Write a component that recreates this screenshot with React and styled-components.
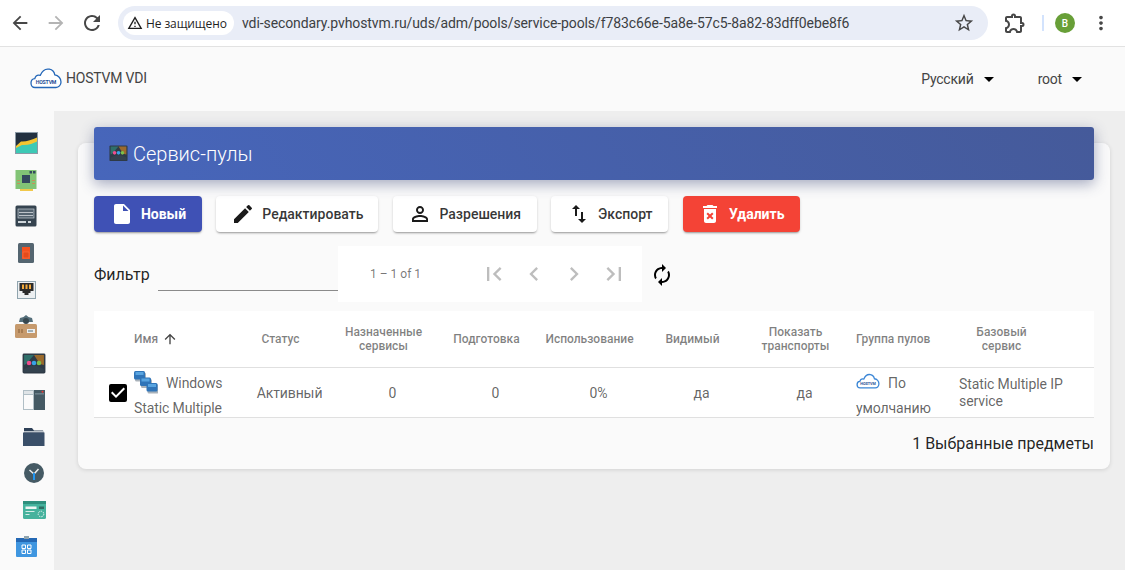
import React from 'react';
import styled, { createGlobalStyle } from 'styled-components';
import {
  MdArrowBack, MdArrowForward, MdRefresh, MdOutlineWarningAmber, MdStarBorder, MdOutlineExtension,
  MdMoreVert, MdArrowDropDown, MdInsertDriveFile, MdEdit, MdPermIdentity, MdImportExport,
  MdDeleteForever, MdFirstPage, MdChevronLeft, MdChevronRight, MdLastPage, MdAutorenew,
  MdArrowUpward, MdCheckBox,
} from 'react-icons/md';

const GlobalStyle = createGlobalStyle`
  html, body {
    margin: 0;
    height: 570px;
    overflow: hidden;
    background: #eeeeee;
    font-family: Roboto, "Liberation Sans", sans-serif;
  }
  * { box-sizing: border-box; }
`;

const BrowserBar = styled.div`
  height: 47px;
  background: #ffffff;
  border-bottom: 1px solid #e2e2e2;
  display: flex;
  align-items: center;
  padding-left: 2px;
  color: #474747;
`;

const NavIcon = styled.span`
  width: 36px;
  height: 24px;
  margin-left: ${p => p.$ml || 0}px;
  display: flex;
  align-items: center;
  justify-content: center;
  color: ${p => (p.$off ? '#b4b4b4' : '#474747')};
  font-size: ${p => p.$size || 20}px;
`;

const AddressBar = styled.div`
  width: 870px;
  height: 34px;
  margin-left: 8px;
  border-radius: 17px;
  background: #e9edf7;
  display: flex;
  align-items: center;
  padding: 0 13px 0 5px;
`;

const SecurityPill = styled.div`
  height: 24px;
  width: 111px;
  border-radius: 12px;
  background: #ffffff;
  display: flex;
  align-items: center;
  padding-left: 4px;
  gap: 3px;
  font-size: 12px;
  font-weight: 500;
  color: #1f1f1f;
  font-family: "Open Sans", Roboto, sans-serif;
  letter-spacing: -0.1px;
  svg { font-size: 16px; }
`;

const Url = styled.div`
  flex: 1;
  margin-left: 8px;
  font-size: 14px;
  color: #3c4043;
  letter-spacing: -0.09px;
`;

const BarDivider = styled.div`
  width: 2px;
  height: 16px;
  background: #d3e3fd;
  margin: 0 11px 0 9px;
`;

const Avatar = styled.div`
  width: 20px;
  height: 20px;
  border-radius: 50%;
  background: #689f38;
  color: #ffffff;
  font-size: 10px;
  font-weight: 500;
  display: flex;
  align-items: center;
  justify-content: center;
  margin-right: 8px;
`;

const NavBar = styled.div`
  height: 64px;
  background: #fafafa;
  display: flex;
  align-items: center;
  padding: 0 36px 0 30px;
  color: #444444;
  font-size: 14px;
`;

const Brand = styled.div`
  display: flex;
  align-items: center;
  gap: 4px;
  flex: 1;
  margin-top: -2px;
  letter-spacing: -0.2px;
`;

const MenuLink = styled.div`
  display: flex;
  align-items: center;
  margin-left: ${p => p.$ml || 0}px;
  letter-spacing: -0.2px;
  svg { font-size: 24px; margin-left: 3px; color: #000; }
`;

const Body = styled.div`
  display: flex;
  height: 459px;
`;

const Sidebar = styled.div`
  width: 54px;
  flex: none;
  background: #fafafa;
  padding-top: 20px;
  display: flex;
  flex-direction: column;
  gap: 12.7px;
`;

const SideItem = styled.div`
  height: 24px;
  width: 24px;
  margin-left: ${p => (p.$sub ? 22 : 14)}px;
  display: flex;
  align-items: center;
  justify-content: center;
`;

const Main = styled.div`
  flex: 1;
  padding: 32px 15px 0 24px;
`;

const Card = styled.div`
  background: #fafafa;
  border-radius: 8px;
  padding: 0 16px;
  height: 326px;
  box-shadow: 0 1px 4px rgba(0, 0, 0, 0.12);
`;

const CardHeader = styled.div`
  height: 53px;
  position: relative;
  top: -16px;
  margin-bottom: -16px;
  border-radius: 3px;
  background: linear-gradient(60deg, #4766bb, #455a9a);
  box-shadow: 0 4px 14px rgba(60, 72, 120, 0.45);
  color: #ffffff;
  font-size: 20px;
  font-weight: 300;
  display: flex;
  align-items: center;
  gap: 5px;
  padding-left: 15px;
`;

const Toolbar = styled.div`
  display: flex;
  gap: 14.3px;
  margin-top: 16px;
`;

const ActionButton = styled.div`
  height: 36px;
  width: ${p => p.$w}px;
  border-radius: 4px;
  background: ${p => p.$bg || '#ffffff'};
  color: ${p => (p.$bg ? '#ffffff' : 'rgba(0, 0, 0, 0.8)')};
  font-size: 14px;
  font-weight: ${p => (p.$bg ? 700 : 500)};
  display: flex;
  align-items: center;
  justify-content: center;
  gap: 7px;
  box-shadow: 0 2px 2px -1px rgba(0, 0, 0, 0.3), 0 1px 3px rgba(0, 0, 0, 0.14);
  svg { font-size: 24px; color: ${p => (p.$bg ? '#ffffff' : '#1a1a1a')}; }
`;

const FilterRow = styled.div`
  display: flex;
  align-items: center;
  margin-top: 14px;
  height: 56px;
`;

const FilterLabel = styled.div`
  width: 64px;
  font-size: 16px;
  color: rgba(0, 0, 0, 0.87);
`;

const FilterInput = styled.div`
  width: 180px;
  height: 32px;
  align-self: flex-end;
  margin-bottom: 11px;
  border-bottom: 1px solid #8a8a8a;
`;

const Paginator = styled.div`
  width: 304px;
  height: 56px;
  background: #ffffff;
  display: flex;
  align-items: center;
  padding-left: 32px;
  color: rgba(0, 0, 0, 0.54);
  font-size: 12px;
`;

const RangeLabel = styled.div`
  width: 104px;
`;

const PageButton = styled.div`
  width: 40px;
  height: 40px;
  display: flex;
  align-items: center;
  justify-content: center;
  color: rgba(0, 0, 0, 0.26);
  font-size: 28px;
`;

const ReloadIcon = styled.div`
  margin: 1px 0 0 8px;
  display: flex;
  color: #000000;
  font-size: 24px;
`;

const Table = styled.div`
  margin-top: 9px;
  background: #ffffff;
`;

const Row = styled.div`
  display: grid;
  grid-template-columns: 32px repeat(8, 103px) 144px;
  grid-template-rows: 100%;
  height: ${p => p.$h}px;
  border-bottom: 1px solid #e0e0e0;
  overflow: hidden;
`;

const HeadCell = styled.div`
  padding: 0 ${p => p.$pr || 8}px 0 ${p => p.$pl || 8}px;
  display: flex;
  align-items: center;
  justify-content: ${p => (p.$left ? 'flex-start' : 'center')};
  text-align: ${p => (p.$left ? 'left' : 'center')};
  font-size: 12px;
  line-height: 14px;
  font-weight: 500;
  color: rgba(0, 0, 0, 0.5);
  white-space: ${p => (p.$nowrap ? 'nowrap' : 'normal')};
  svg { font-size: 16px; margin-left: 4px; color: #444; }
`;

const Cell = styled.div`
  padding-left: ${p => p.$pl || 18}px;
  display: flex;
  align-items: center;
  justify-content: ${p => (p.$left ? 'flex-start' : 'center')};
  font-size: 14px;
  line-height: ${p => p.$lh || 20}px;
  letter-spacing: -0.1px;
  color: rgba(0, 0, 0, 0.62);
  min-height: 0;
`;

const ServiceText = styled.div`
  width: 112px;
`;

const WrapText = styled.div`
  line-height: 25px;
  margin-top: ${p => p.$mt}px;
  white-space: nowrap;
  svg {
    vertical-align: -1px;
    margin-right: 8px;
    transform: translateY(${p => p.$shift || 0}px);
  }
`;

const CheckCell = styled.div`
  display: flex;
  align-items: center;
  margin-left: 12px;
  color: #000000;
  font-size: 24px;
  svg { flex: none; }
`;

const SelectedInfo = styled.div`
  margin-top: 16px;
  text-align: right;
  font-size: 16px;
  line-height: 20px;
  color: rgba(0, 0, 0, 0.87);
`;

const CloudLogo = ({ w = 32, h = 22, small }) => (
  <svg width={w} height={h} viewBox="0 0 32 22" fill="none">
    <path d="M5 20.5C2.5 20.5 1 18.6 1 16c0-2.500 1.600-4.200 3.800-4.400C5.500 8.800 7.800 7.700 10.300 8.300 12 4.200 15.500 1.500 19.300 2.200c3 .5 5 2.800 5.500 5.700 3.500.4 6.200 3.400 6.200 7 0 3.200-2.300 5.600-5 5.600z" fill="#fff" stroke={small ? '#3b86d6' : '#2467b8'} strokeWidth={small ? 1.800 : 1.300} />
    <text x="16" y="16.500" textAnchor="middle" fontSize="5.200" fontWeight="700" fill="#1f4f96" fontFamily="Roboto, sans-serif">HOSTVM</text>
  </svg>
);

const PoolsIcon = ({ size = 24 }) => (
  <svg width={size} height={size * 0.87} viewBox="0 0 24 21">
    <rect x="0.500" y="0.500" width="23" height="20" rx="1.500" fill="#2e3a46" />
    <path d="M2 2h10l-8 9-2 1z" fill="#2f6f6a" />
    <path d="M22 2H12l6 9 4 1z" fill="#9a6a2c" />
    <path d="M2 19h20v-3l-7-3H9l-7 3z" fill="#33424e" />
    <circle cx="7" cy="10" r="2.300" fill="#ef4d8e" />
    <circle cx="12" cy="10" r="2.300" fill="#38a3e6" />
    <circle cx="17" cy="10" r="2.300" fill="#7cc04b" />
  </svg>
);

const sideIcons = [
  <svg width="23" height="22" viewBox="0 0 23 22"><rect x="0.500" y="0.500" width="22" height="21" fill="#22303f" stroke="#8b9aa6" /><path d="M1 14 6 9.500c5 .5 11-2 16-4V21H1z" fill="#f4c531" /><path d="M1 21v-5l6-3c6 .5 11-1.500 15-3.500V21z" fill="#3dc9b5" /></svg>,
  <svg width="22" height="22" viewBox="0 0 22 22"><path d="M5 20h13v2H5z" fill="#f1c84a" /><rect x="0.500" y="1" width="21" height="19" fill="#82c476" /><rect x="7" y="6" width="8" height="8" fill="#34495e" /><rect x="14.500" y="2" width="2.500" height="2.500" fill="#34495e" /><rect x="18" y="2" width="2.500" height="2.500" fill="#34495e" /><path d="M2 11h3v1H2zm0 3h3v1H2zm15-3h3v1h-3zm0 3h3v1h-3z" fill="#c98f5a" /></svg>,
  <svg width="22" height="22" viewBox="0 0 22 22"><rect x="0.500" y="0.500" width="21" height="21" rx="1.500" fill="#35434f" /><rect x="3" y="4" width="16" height="9" fill="#54636f" stroke="#c4ccd2" strokeWidth="0.700" /><path d="M4 7h14v.8H4zM4 10h14v.8H4z" fill="#dfe4e8" /><path d="M3 16h8v2H3zm10 0h3v2h-3z" fill="#cdd4d9" /></svg>,
  <svg width="16" height="20" viewBox="0 0 16 20"><rect width="16" height="20" rx="1.500" fill="#546570" /><rect x="4" y="4" width="8" height="12" fill="#f4511e" /><rect x="5" y="9" width="6" height="6" fill="#e64a19" stroke="#f77b50" strokeWidth="0.500" /></svg>,
  <svg width="19" height="18" viewBox="0 0 19 18"><rect x="0.500" y="0.500" width="18" height="17" fill="#eceff1" stroke="#90a4ae" /><path d="M2.500 2h14v8h-3v2h-2v2h-4v-2h-2v-2h-3z" fill="#2b2b2b" /><rect x="5" y="3.500" width="2" height="4.500" fill="#f2a93b" /><rect x="8.500" y="3.500" width="2" height="4.500" fill="#f2a93b" /><rect x="12" y="3.500" width="2" height="4.500" fill="#f2a93b" /></svg>,
  <svg width="22" height="23" viewBox="0 0 22 23"><path d="M11 0l2.500 2 3.500 1 1 4H4l1-4 3.500-1z" fill="#546e7a" /><circle cx="11" cy="6" r="3" fill="#37474f" /><rect y="9" width="22" height="14" rx="1.500" fill="#c69a6d" /><rect x="12" y="14" width="8" height="4" fill="#eceff1" /><rect x="13" y="15.500" width="5" height="1" fill="#546e7a" /><path d="M3 14h2v4H3zm3 0h2v4H6z" fill="#a67c52" /></svg>,
  <PoolsIcon />,
  <svg width="22" height="20" viewBox="0 0 22 20"><rect x="0.500" y="0.500" width="10" height="19" fill="#fafafa" stroke="#b0bec5" /><rect x="0.500" y="0.500" width="10" height="4" fill="#dfe4e7" stroke="#b0bec5" /><rect x="11" width="11" height="20" fill="#455a64" /><rect x="12" y="3.500" width="9" height="0.800" fill="#90a4ae" /><circle cx="19.500" cy="1.800" r="1" fill="#e53935" /></svg>,
  <svg width="22" height="18" viewBox="0 0 22 18"><path d="M1 0h8l2 2.500h9l1 2H1z" fill="#2e4057" /><path d="M1 3.500h20" stroke="#dfe4e8" strokeWidth="0.800" /><rect y="4.500" width="21.500" height="13.500" fill="#3a4f69" /></svg>,
  <svg width="20" height="20" viewBox="0 0 20 20"><circle cx="10" cy="10" r="10" fill="#455a64" /><path d="M10 11 5.500 7M10 11l4.500-5" stroke="#eceff1" strokeWidth="1.500" /><rect x="9" y="10" width="2" height="7" fill="#2196f3" /></svg>,
  <svg width="23" height="18" viewBox="0 0 23 18"><rect width="23" height="18" rx="1.500" fill="#45b29d" /><rect width="23" height="3" fill="#2e8f7d" /><rect x="2.500" y="5.500" width="11" height="2.500" fill="#eef5f3" /><rect x="16" y="5.500" width="5" height="2.500" fill="#2f6d62" /><rect x="2.500" y="10" width="9" height="1" fill="#d5ece7" /><rect x="2.500" y="13" width="4" height="1" fill="#d5ece7" /><circle cx="18" cy="13" r="2.800" fill="none" stroke="#e8f5f2" strokeDasharray="1.500 1" /></svg>,
  <svg width="21" height="21" viewBox="0 0 21 21"><rect y="2" width="21" height="19" rx="1" fill="#3f96e0" /><rect y="2" width="21" height="4" fill="#2468b4" /><rect x="8" width="5" height="3" fill="#90a4ae" /><path d="M6 9h3.500v3.500H6zm5.500 0H15v3.500h-3.500zM6 14h3.500v3.500H6zm5.500 0H15v3.500h-3.500z" fill="none" stroke="#fff" /></svg>,
];

const ServerBlock = ({ x, y }) => (
  <g>
    <rect x={x + 1} y={y + 1.500} width="11" height="9" rx="1.500" fill="#a9b2ba" />
    <rect x={x} y={y} width="11" height="8.500" rx="1.500" fill="#2f74b8" />
    <rect x={x + 1.500} y={y + 1} width="8" height="3" fill="#58a4e0" />
  </g>
);

const ServersIcon = () => (
  <svg width="24" height="23" viewBox="0 0 24 23">
    <ServerBlock x={0} y={0} />
    <ServerBlock x={6} y={6.500} />
    <ServerBlock x={12.500} y={12} />
  </svg>
);

const columns = [
  { title: 'Статус' },
  { title: 'Назначенные сервисы' },
  { title: 'Подготовка', nowrap: true },
  { title: 'Использование', nowrap: true },
  { title: 'Видимый' },
  { title: 'Показать транспорты' },
];

const App = () => (
  <>
    <GlobalStyle />
    <BrowserBar>
      <NavIcon $size={22}><MdArrowBack /></NavIcon>
      <NavIcon $size={22} $off><MdArrowForward /></NavIcon>
      <NavIcon $size={24}><MdRefresh /></NavIcon>
      <AddressBar>
        <SecurityPill><MdOutlineWarningAmber />Не защищено</SecurityPill>
        <Url>vdi-secondary.pvhostvm.ru/uds/adm/pools/service-pools/f783c66e-5a8e-57c5-8a82-83dff0ebe8f6</Url>
        <MdStarBorder size={22} color="#474747" />
      </AddressBar>
      <NavIcon $size={24} $ml={9}><MdOutlineExtension /></NavIcon>
      <BarDivider />
      <Avatar>B</Avatar>
      <NavIcon $size={22}><MdMoreVert /></NavIcon>
    </BrowserBar>

    <NavBar>
      <Brand><CloudLogo />HOSTVM VDI</Brand>
      <MenuLink>Русский<MdArrowDropDown /></MenuLink>
      <MenuLink $ml={37}>root<MdArrowDropDown /></MenuLink>
    </NavBar>

    <Body>
      <Sidebar>
        {sideIcons.map((icon, index) => (
          <SideItem key={index} $sub={index >= 6 && index <= 10}>{icon}</SideItem>
        ))}
      </Sidebar>
      <Main>
        <Card>
          <CardHeader><PoolsIcon size={19} />Сервис-пулы</CardHeader>
          <Toolbar>
            <ActionButton $w={108} $bg="#3f51b5"><MdInsertDriveFile />Новый</ActionButton>
            <ActionButton $w={162.2}><MdEdit />Редактировать</ActionButton>
            <ActionButton $w={144}><MdPermIdentity />Разрешения</ActionButton>
            <ActionButton $w={117.4}><MdImportExport />Экспорт</ActionButton>
            <ActionButton $w={117} $bg="#f44336"><MdDeleteForever />Удалить</ActionButton>
          </Toolbar>

          <FilterRow>
            <FilterLabel>Фильтр</FilterLabel>
            <FilterInput />
            <Paginator>
              <RangeLabel>1 – 1 of 1</RangeLabel>
              <PageButton><MdFirstPage /></PageButton>
              <PageButton><MdChevronLeft /></PageButton>
              <PageButton><MdChevronRight /></PageButton>
              <PageButton><MdLastPage /></PageButton>
            </Paginator>
            <ReloadIcon><MdAutorenew /></ReloadIcon>
          </FilterRow>

          <Table>
            <Row $h={57}>
              <div />
              <HeadCell $left>Имя<MdArrowUpward /></HeadCell>
              {columns.map(col => (
                <HeadCell key={col.title} $nowrap={col.nowrap}>{col.title}</HeadCell>
              ))}
              <HeadCell $left $nowrap $pl={9}>Группа пулов</HeadCell>
              <HeadCell $pr={49}>Базовый сервис</HeadCell>
            </Row>
            <Row $h={50}>
              <CheckCell><MdCheckBox /></CheckCell>
              <Cell $left $pl={8}><WrapText $mt={1} $shift={5}><ServersIcon />Windows<br />Static Multiple</WrapText></Cell>
              <Cell>Активный</Cell>
              <Cell>0</Cell>
              <Cell>0</Cell>
              <Cell>0%</Cell>
              <Cell>да</Cell>
              <Cell>да</Cell>
              <Cell $left $pl={9}><WrapText $mt={7}><CloudLogo w={24} h={16} small />По<br />умолчанию</WrapText></Cell>
              <Cell $left $pl={9} $lh={17}><ServiceText>Static Multiple IP service</ServiceText></Cell>
            </Row>
          </Table>
          <SelectedInfo>1 Выбранные предметы</SelectedInfo>
        </Card>
      </Main>
    </Body>
  </>
);

export default App;
